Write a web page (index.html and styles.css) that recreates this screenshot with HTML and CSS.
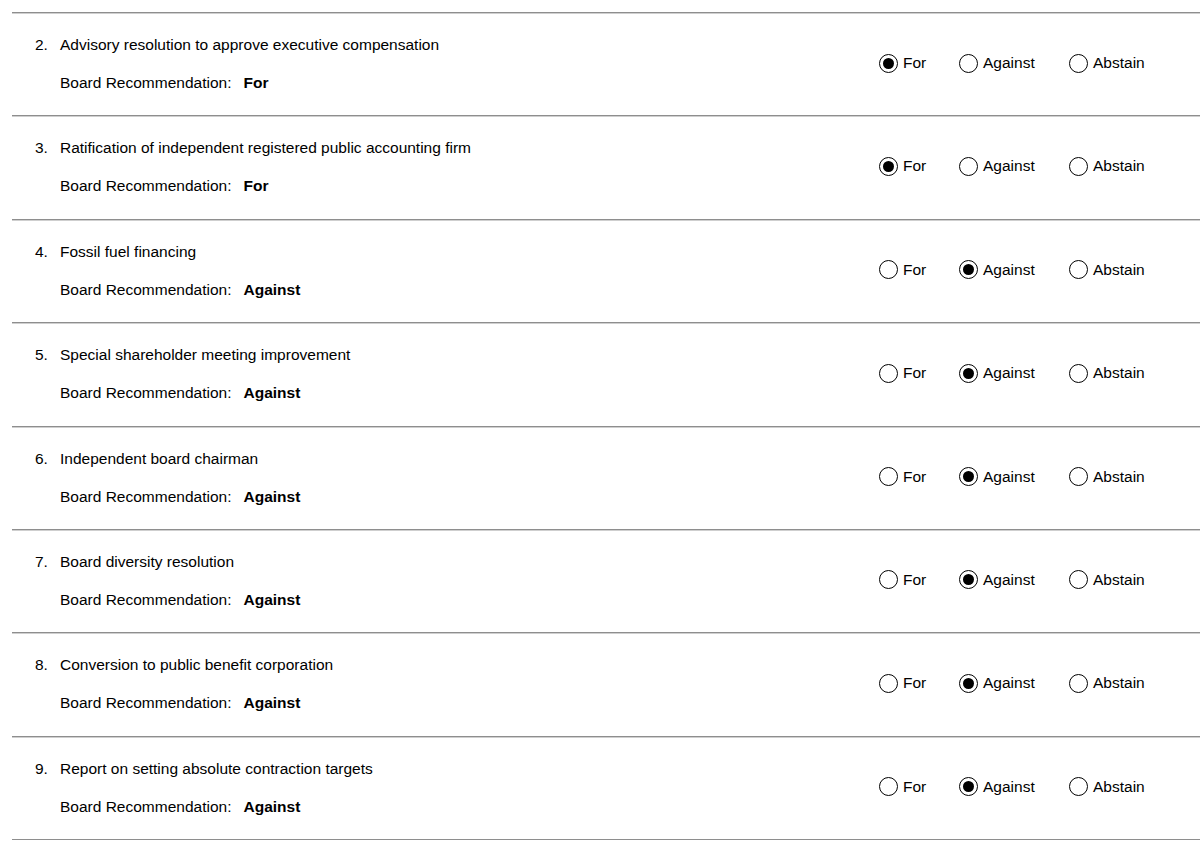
FILE: index.html
```html
<!DOCTYPE html>
<html lang="en">
<head>
<meta charset="utf-8">
<title>Proxy Ballot</title>
<link rel="stylesheet" href="styles.css">
</head>
<body>
<div class="ballot">
  <div class="item">
    <div class="info">
      <div class="title"><span class="num">2.</span><span>Advisory resolution to approve executive compensation</span></div>
      <div class="rec">Board Recommendation:<b>For</b></div>
    </div>
    <div class="options">
      <label class="opt"><span class="radio on"></span>For</label>
      <label class="opt"><span class="radio"></span>Against</label>
      <label class="opt"><span class="radio"></span>Abstain</label>
    </div>
  </div>
  <div class="item">
    <div class="info">
      <div class="title"><span class="num">3.</span><span>Ratification of independent registered public accounting firm</span></div>
      <div class="rec">Board Recommendation:<b>For</b></div>
    </div>
    <div class="options">
      <label class="opt"><span class="radio on"></span>For</label>
      <label class="opt"><span class="radio"></span>Against</label>
      <label class="opt"><span class="radio"></span>Abstain</label>
    </div>
  </div>
  <div class="item">
    <div class="info">
      <div class="title"><span class="num">4.</span><span>Fossil fuel financing</span></div>
      <div class="rec">Board Recommendation:<b>Against</b></div>
    </div>
    <div class="options">
      <label class="opt"><span class="radio"></span>For</label>
      <label class="opt"><span class="radio on"></span>Against</label>
      <label class="opt"><span class="radio"></span>Abstain</label>
    </div>
  </div>
  <div class="item">
    <div class="info">
      <div class="title"><span class="num">5.</span><span>Special shareholder meeting improvement</span></div>
      <div class="rec">Board Recommendation:<b>Against</b></div>
    </div>
    <div class="options">
      <label class="opt"><span class="radio"></span>For</label>
      <label class="opt"><span class="radio on"></span>Against</label>
      <label class="opt"><span class="radio"></span>Abstain</label>
    </div>
  </div>
  <div class="item">
    <div class="info">
      <div class="title"><span class="num">6.</span><span>Independent board chairman</span></div>
      <div class="rec">Board Recommendation:<b>Against</b></div>
    </div>
    <div class="options">
      <label class="opt"><span class="radio"></span>For</label>
      <label class="opt"><span class="radio on"></span>Against</label>
      <label class="opt"><span class="radio"></span>Abstain</label>
    </div>
  </div>
  <div class="item">
    <div class="info">
      <div class="title"><span class="num">7.</span><span>Board diversity resolution</span></div>
      <div class="rec">Board Recommendation:<b>Against</b></div>
    </div>
    <div class="options">
      <label class="opt"><span class="radio"></span>For</label>
      <label class="opt"><span class="radio on"></span>Against</label>
      <label class="opt"><span class="radio"></span>Abstain</label>
    </div>
  </div>
  <div class="item">
    <div class="info">
      <div class="title"><span class="num">8.</span><span>Conversion to public benefit corporation</span></div>
      <div class="rec">Board Recommendation:<b>Against</b></div>
    </div>
    <div class="options">
      <label class="opt"><span class="radio"></span>For</label>
      <label class="opt"><span class="radio on"></span>Against</label>
      <label class="opt"><span class="radio"></span>Abstain</label>
    </div>
  </div>
  <div class="item">
    <div class="info">
      <div class="title"><span class="num">9.</span><span>Report on setting absolute contraction targets</span></div>
      <div class="rec">Board Recommendation:<b>Against</b></div>
    </div>
    <div class="options">
      <label class="opt"><span class="radio"></span>For</label>
      <label class="opt"><span class="radio on"></span>Against</label>
      <label class="opt"><span class="radio"></span>Abstain</label>
    </div>
  </div>
</div>
</body>
</html>
```

FILE: styles.css
```css
html, body {
  margin: 0;
  padding: 0;
  background: #ffffff;
}

body {
  font-family: "Liberation Sans", Arial, Helvetica, sans-serif;
  font-size: 15.5px;
  color: #000;
}

.ballot {
  padding: 12px 0 0 12px;
}

.item {
  display: grid;
  grid-template-columns: 1fr 321px;
  align-items: center;
  border-top: 1px solid #8e8e8e;
  box-shadow: inset 0 1px 0 #cfcfcf;
  padding: 21px 0 22.375px 0;
}

.item:last-child {
  border-bottom: 1px solid #8e8e8e;
}

.info {
  display: flex;
  flex-direction: column;
  gap: 19px;
  padding-left: 23px;
}

.title,
.rec {
  line-height: 20px;
  height: 20px;
  white-space: nowrap;
}

.title {
  display: flex;
  margin-top: 1px;
  margin-bottom: -1px;
}

.num {
  width: 25px;
  flex: none;
}

.rec {
  padding-left: 25px;
}

.rec b {
  font-weight: bold;
  margin-left: 12px;
}

.options {
  display: grid;
  grid-template-columns: 80px 110px auto;
  align-items: center;
  margin-top: -1px;
}

.opt {
  display: flex;
  align-items: center;
  gap: 5px;
  line-height: 20px;
}

.radio {
  box-sizing: border-box;
  width: 19px;
  height: 19px;
  border: 1.5px solid #000;
  border-radius: 50%;
  display: inline-flex;
  align-items: center;
  justify-content: center;
  flex: none;
}

.radio.on::after {
  content: "";
  width: 11px;
  height: 11px;
  border-radius: 50%;
  background: #000;
}
```
